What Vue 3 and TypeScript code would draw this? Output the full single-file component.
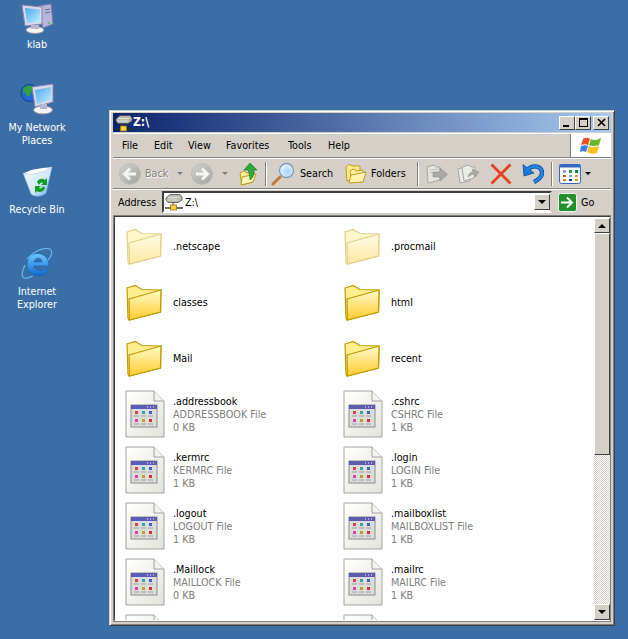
<template>
  <div class="desktop">
    <svg class="defs" width="0" height="0">
      <defs>
        <linearGradient id="folderFront" x1="0" y1="0" x2="0" y2="1">
          <stop offset="0" stop-color="#fffbc8" />
          <stop offset="1" stop-color="#ffcc30" />
        </linearGradient>
        <linearGradient id="page" x1="0" y1="0" x2="1" y2="1">
          <stop offset="0" stop-color="#ffffff" />
          <stop offset="1" stop-color="#e4e4dc" />
        </linearGradient>
        <linearGradient id="screen" x1="0" y1="0" x2="1" y2="1">
          <stop offset="0" stop-color="#4aa8f0" />
          <stop offset="1" stop-color="#c4ecff" />
        </linearGradient>
        <linearGradient id="bin" x1="0" y1="0" x2="1" y2="1">
          <stop offset="0" stop-color="#f4fbff" />
          <stop offset="0.6" stop-color="#cfe8fa" />
          <stop offset="1" stop-color="#5ba8e8" />
        </linearGradient>
        <linearGradient id="ieBlue" x1="0" y1="0" x2="0" y2="1">
          <stop offset="0" stop-color="#6cc8fc" />
          <stop offset="1" stop-color="#1468d0" />
        </linearGradient>
        <linearGradient id="btn" x1="0" y1="0" x2="1" y2="1">
          <stop offset="0" stop-color="#d0d0cc" />
          <stop offset="1" stop-color="#a4a4a0" />
        </linearGradient>
        <radialGradient id="lens" cx="0.6" cy="0.6" r="0.7">
          <stop offset="0" stop-color="#a8d4fa" />
          <stop offset="1" stop-color="#eef8ff" />
        </radialGradient>

        <symbol id="folder" viewBox="0 0 40 40">
          <path d="M2 6 L10 3.5 L17 7.5 L36 8 L35.5 30 L4 38 L3 36 Z" fill="#ffee90" stroke="#c09a00" stroke-width="1.2" />
          <path d="M4 17 L36 8 L35.5 30 L4.5 38 Z" fill="url(#folderFront)" stroke="#c09a00" stroke-width="1.2" />
        </symbol>

        <symbol id="doc" viewBox="0 0 40 48">
          <path d="M1 1 H29 L39 11 V47 H1 Z" fill="url(#page)" stroke="#a4a49c" />
          <path d="M29 1 V11 H39" fill="#f4f4f0" stroke="#a4a49c" />
          <rect x="6" y="15" width="26" height="22" fill="#dcdcd8" stroke="#8c8c94" />
          <rect x="6" y="15" width="26" height="4" fill="#5c5cb0" />
          <path d="M22 17 h1 m2 0 h1 m2 0 h1" stroke="#fff" />
          <rect x="10" y="21" width="3" height="3" fill="#d84050" />
          <rect x="17" y="21" width="3" height="3" fill="#30a8b0" />
          <rect x="24" y="21" width="3" height="3" fill="#4060c8" />
          <rect x="10" y="29" width="3" height="3" fill="#d840c0" />
          <rect x="17" y="29" width="3" height="3" fill="#b8a820" />
          <rect x="24" y="29" width="3" height="3" fill="#d03040" />
          <path d="M9 26 h5 m2 0 h5 m2 0 h5 M9 34 h5 m2 0 h5 m2 0 h5" stroke="#a0a0a0" />
        </symbol>

        <symbol id="netdrive" viewBox="0 0 18 18">
          <path d="M1 5 L5 1.5 H15 L17 4 V7 L13 9.5 H3 L1 7 Z" fill="#b8b8b0" stroke="#505050" stroke-width="0.8" />
          <path d="M3 4.5 H14 M2 7 H13" stroke="#f0f0ec" stroke-width="0.8" />
          <path d="M8 9.5 V12" stroke="#404040" />
          <path d="M0 15 H18" stroke="#303030" stroke-width="1.4" />
          <rect x="5.5" y="12" width="6" height="5" fill="#f8d040" stroke="#a07810" stroke-width="0.8" />
        </symbol>
      </defs>
    </svg>

    <div class="desk-icon pc">
      <svg width="34" height="32" viewBox="0 0 34 32">
        <path d="M18 4 L31 2 L33 22 L23 26 Z" fill="#b6b6dc" stroke="#7c7ca8" />
        <path d="M25 8 L30 7 M25 11 L30 10" stroke="#6a6a98" />
        <circle cx="29" cy="21" r="1" fill="#50c040" />
        <path d="M2 3 L22 5 L22 22 L5 24 Z" fill="#d8d8ec" stroke="#8484b0" />
        <path d="M5 6 L20 7.5 L20 20 L7 21 Z" fill="url(#screen)" />
        <ellipse cx="15" cy="28" rx="9" ry="3.5" fill="#f4f4f4" stroke="#9090a8" />
        <rect x="11" y="23" width="8" height="4" fill="#b8b8d0" />
      </svg>
      <span>klab</span>
    </div>
    <div class="desk-icon net">
      <svg width="34" height="32" viewBox="0 0 34 32">
        <circle cx="9.5" cy="10" r="8.5" fill="#2468d8" stroke="#1c3c90" />
        <path d="M5 4 C9 1 13 3 14 6 C12 9 11 8 10 12 C8 15 6 12 5 10 C2 9 2 6 5 4 Z" fill="#30a040" />
        <path d="M12 4 L33 1 L33 19 L15 24 Z" fill="#d8d8ec" stroke="#8484b0" />
        <path d="M15 7 L31 4 L31 17 L17 21 Z" fill="url(#screen)" />
        <ellipse cx="23" cy="27" rx="9.5" ry="4" fill="#f4f4f4" stroke="#9090a8" />
        <rect x="20" y="21" width="7" height="5" fill="#b8b8d0" />
      </svg>
      <span>My Network<br />Places</span>
    </div>
    <div class="desk-icon bin">
      <svg width="32" height="32" viewBox="0 0 32 32">
        <path d="M2 7 C10 10 24 6 31 1 L25 27 C21 31 13 31 10 28 Z" fill="url(#bin)" stroke="#88b0d8" stroke-width="0.6" />
        <path d="M3 7 C10 3 22 2 31 1 C24 6 10 10 3 7 Z" fill="#fbfdff" />
        <g transform="translate(2 2)">
          <path d="M14 14 C16 10 20 10 22 12 L24 10 V17 H18 L20 15 C18 14 17 15 16 17 Z M22 20 C21 24 16 25 14 23 L12 25 V18 H18 L16 20 C18 21 19 20 20 18 Z" fill="#10a020" />
        </g>
      </svg>
      <span>Recycle Bin</span>
    </div>
    <div class="desk-icon ie">
      <svg width="32" height="32" viewBox="0 0 32 32">
        <path d="M6 17 C6 7 14 4 20 6 C26 8 28 13 28 18 H13 C14 23 20 24 26 20 L25 26 C17 30 6 27 6 17 Z M13 14 H21 C21 9 14 9 13 14 Z" fill="url(#ieBlue)" fill-rule="evenodd" stroke="#1460b8" stroke-width="0.6" />
        <path d="M6 11 C13 4 22 -1 29 1 C32 3 31 8 27 12 M4 17 C1 23 0 29 3 30 C6 31 9 29 12 28" fill="none" stroke="#62b4f0" stroke-width="1.3" />
      </svg>
      <span>Internet<br />Explorer</span>
    </div>

    <div class="window">
      <div class="titlebar">
        <svg width="18" height="18"><use href="#netdrive" /></svg>
        <span class="title-text">Z:\</span>
        <div class="caption-btns">
          <button class="cap"><span class="cap-min"></span></button>
          <button class="cap"><span class="cap-max"></span></button>
          <button class="cap cap-close">
            <svg width="9" height="9" viewBox="0 0 9 9"><path d="M1 1 L8 8 M8 1 L1 8" stroke="#000" stroke-width="1.6" /></svg>
          </button>
        </div>
      </div>

      <div class="menubar">
        <span v-for="m in menus" :key="m.label" class="menu" :style="{ width: m.width + 'px' }">{{ m.label }}</span>
        <div class="flag">
          <svg width="22" height="20" viewBox="0 0 22 20">
            <path d="M3 3 C6 1 8 2 10 3 L8 9 C6 8 4 8 1 9 Z" fill="#e8562a" />
            <path d="M11 3 C14 5 17 4 21 2 L19 9 C16 10 12 11 9 9 Z" fill="#6cb82c" />
            <path d="M1 10 C4 9 6 9 8 10 L6 16 C4 15 2 15 0 16 Z" fill="#3c80e0" />
            <path d="M9 10 C12 12 15 11 19 10 L17 17 C14 18 10 18 7 16 Z" fill="#f8c020" />
          </svg>
        </div>
      </div>

      <div class="toolbar">
        <div class="tool back">
          <svg width="22" height="22" viewBox="0 0 22 22">
            <circle cx="11" cy="11" r="10.5" fill="url(#btn)" stroke="#bcbcb8" />
            <path d="M17 11 H6 M11 5.5 L5.5 11 L11 16.5" fill="none" stroke="#f4f4f2" stroke-width="3" />
          </svg>
          <span class="disabled">Back</span>
        </div>
        <span class="caret gray fwd-gap"></span>
        <svg width="22" height="22" viewBox="0 0 22 22">
          <circle cx="11" cy="11" r="10.5" fill="url(#btn)" stroke="#bcbcb8" />
          <path d="M5 11 H16 M11 5.5 L16.5 11 L11 16.5" fill="none" stroke="#f4f4f2" stroke-width="3" />
        </svg>
        <span class="caret gray up-gap"></span>
        <svg width="20" height="24" viewBox="0 0 20 24">
          <path d="M1 11 L5 9 L8 11 L15 10 L14 20 L3 23 Z" fill="#fcec98" stroke="#c09a18" />
          <path d="M3 15 L17 12 L14 20 L2 23 Z" fill="#fff4b8" stroke="#c09a18" />
          <path d="M11 1 L18 8 H15 C15 13 14 16 11 18 C11 14 10 11 9 8 H5 Z" fill="#2ca83c" stroke="#107018" stroke-width="0.6" />
        </svg>
        <i class="tsep sep-up"></i>
        <div class="tool search">
          <svg width="24" height="24" viewBox="0 0 24 24">
            <path d="M2 22 L9 15" stroke="#c87838" stroke-width="3" stroke-linecap="round" />
            <circle cx="15.5" cy="8.5" r="7" fill="url(#lens)" stroke="#8098b8" stroke-width="1.3" />
          </svg>
          <span>Search</span>
        </div>
        <div class="tool folders">
          <svg width="22" height="21" viewBox="0 0 22 21">
            <path d="M1 4 L4 1.5 L8 3 L15 3 V14 L2 18 Z" fill="#fde98c" stroke="#c49a18" />
            <path d="M5 8 L8 6 L12 8 L18 7 V12 L6 15 Z" fill="#fff0a8" stroke="#c49a18" />
            <path d="M6 12 L21 9 L18 19 L4 20 Z" fill="#fff2b0" stroke="#c49a18" />
          </svg>
          <span>Folders</span>
        </div>
        <i class="tsep sep-move"></i>
        <svg width="22" height="20" viewBox="0 0 22 20">
          <path d="M1 3 L8 1 L10 3 L14 3 V16 L2 19 Z" fill="#e4e4de" stroke="#a8a8a4" />
          <path d="M4 6 L14 5 M4 9 L10 8" stroke="#c4c4c0" />
          <path d="M7 8 H14 V4 L21.5 10.5 L14 17 V13 H7 Z" fill="#a8a8a4" stroke="#909090" stroke-width="0.6" />
        </svg>
        <svg class="gap-copy" width="23" height="20" viewBox="0 0 23 20">
          <path d="M1 5 L8 3 L10 5 L13 5 V17 L3 19 Z" fill="#e8e8e2" stroke="#a8a8a4" />
          <path d="M5 3 L12 1 L14 3 L18 3 L17 14 L7 17 Z" fill="#ecece6" stroke="#a8a8a4" />
          <path d="M11 13 C12 9 14 8 16 8 L15 5 L22 8 L18 13 L17 10 C15 10 14 11 11 13 Z" fill="#a8a8a4" stroke="#909090" stroke-width="0.6" />
        </svg>
        <svg class="gap-x" width="22" height="22" viewBox="0 0 22 22">
          <path d="M1.5 1.5 L20.5 20.5 M20.5 1.5 L1.5 20.5" stroke="#e8401c" stroke-width="2.8" />
        </svg>
        <svg class="gap-x" width="22" height="21" viewBox="0 0 22 21">
          <path d="M5 7 C11 1 20 3 20 10 C20 14 16 17 12 19" fill="none" stroke="#0c4ca8" stroke-width="4.4" />
          <path d="M1 1.5 L2 13 L12 10 Z" fill="#1c78d8" stroke="#0c4ca8" stroke-width="0.8" />
          <path d="M5 7 C11 1 20 3 20 10 C20 14 16 17 12 19" fill="none" stroke="#2484e4" stroke-width="2.8" />
        </svg>
        <i class="tsep sep-views"></i>
        <svg width="22" height="20" viewBox="0 0 22 20">
          <rect x="0.5" y="0.5" width="21" height="19" rx="2" fill="#fff" stroke="#3468c0" />
          <rect x="0.5" y="0.5" width="21" height="3" fill="#3468c0" />
          <rect x="4" y="6" width="3" height="3" fill="#9c9cd8" /><rect x="10" y="6" width="3" height="3" fill="#30a040" /><rect x="16" y="6" width="3" height="3" fill="#109040" />
          <rect x="4" y="11" width="3" height="2" fill="#e85030" /><rect x="10" y="11" width="3" height="2" fill="#70a8e0" /><rect x="16" y="11" width="3" height="2" fill="#e09030" />
          <rect x="4" y="15" width="3" height="2" fill="#e8783c" /><rect x="10" y="15" width="3" height="2" fill="#1c3c90" /><rect x="16" y="15" width="3" height="2" fill="#d0a020" />
        </svg>
        <span class="caret views-gap"></span>
      </div>

      <div class="addressbar">
        <span class="addr-label">Address</span>
        <div class="addr-box">
          <svg width="18" height="18"><use href="#netdrive" /></svg>
          <span>Z:\</span>
          <button class="scroll-btn addr-drop"><span class="tri down"></span></button>
        </div>
        <svg class="go-icon" width="19" height="19" viewBox="0 0 19 19">
          <rect x="0.5" y="0.5" width="18" height="18" rx="2" fill="#20902c" stroke="#f4f4f0" />
          <path d="M3 9.5 H13 M9 4.5 L14 9.5 L9 14.5" stroke="#fff" stroke-width="2" fill="none" />
        </svg>
        <span class="go-text">Go</span>
      </div>

      <div class="content">
        <div class="tiles">
          <div v-for="(f, i) in files" :key="i" class="tile">
            <svg v-if="f.folder" class="ficon" :class="{ hidden: f.hidden }" width="40" height="40"><use href="#folder" /></svg>
            <svg v-else class="dicon" width="40" height="48"><use href="#doc" /></svg>
            <div class="meta">
              <div>{{ f.name }}</div>
              <div v-if="f.kind" class="sub">{{ f.kind }}</div>
              <div v-if="f.size" class="sub">{{ f.size }}</div>
            </div>
          </div>
        </div>
        <div class="scrollbar">
          <button class="scroll-btn first"><span class="tri up"></span></button>
          <div class="thumb"></div>
          <div class="track"></div>
          <button class="scroll-btn"><span class="tri down"></span></button>
        </div>
      </div>
    </div>
  </div>
</template>

<script setup lang="ts">
interface FileItem {
  name: string
  folder?: boolean
  hidden?: boolean
  kind?: string
  size?: string
}

const menus = [
  { label: 'File', width: 32 },
  { label: 'Edit', width: 34 },
  { label: 'View', width: 38 },
  { label: 'Favorites', width: 62 },
  { label: 'Tools', width: 40 },
  { label: 'Help', width: 40 }
]

// last row is cut off by the window, only the icon tops show
const files: FileItem[] = [
  { name: '.netscape', folder: true, hidden: true },
  { name: '.procmail', folder: true, hidden: true },
  { name: 'classes', folder: true },
  { name: 'html', folder: true },
  { name: 'Mail', folder: true },
  { name: 'recent', folder: true },
  { name: '.addressbook', kind: 'ADDRESSBOOK File', size: '0 KB' },
  { name: '.cshrc', kind: 'CSHRC File', size: '1 KB' },
  { name: '.kermrc', kind: 'KERMRC File', size: '1 KB' },
  { name: '.login', kind: 'LOGIN File', size: '1 KB' },
  { name: '.logout', kind: 'LOGOUT File', size: '1 KB' },
  { name: '.mailboxlist', kind: 'MAILBOXLIST File', size: '1 KB' },
  { name: '.Maillock', kind: 'MAILLOCK File', size: '0 KB' },
  { name: '.mailrc', kind: 'MAILRC File', size: '1 KB' },
  { name: '' },
  { name: '' }
]
</script>

<style>
html,
body {
  margin: 0;
  background: #3a6ea5;
}
</style>

<style scoped>
.desktop {
  position: relative;
  width: 628px;
  height: 639px;
  overflow: hidden;
  background: #3a6ea5;
  font-family: "DejaVu Sans", "Liberation Sans", sans-serif;
  font-stretch: condensed;
  font-size: 10.7px;
  line-height: 13px;
  color: #000;
}
.defs {
  position: absolute;
}
.desk-icon {
  position: absolute;
  left: 0;
  width: 74px;
  display: flex;
  flex-direction: column;
  align-items: center;
  color: #fff;
  text-align: center;
}
.desk-icon svg {
  display: block;
}
.desk-icon.pc {
  top: 2px;
  gap: 4px;
}
.desk-icon.net {
  top: 83px;
  gap: 6px;
}
.desk-icon.bin {
  top: 166px;
  gap: 5px;
}
.desk-icon.ie {
  top: 248px;
  gap: 5px;
}
.window {
  position: absolute;
  left: 109px;
  top: 110px;
  width: 506px;
  height: 516px;
  box-sizing: border-box;
  display: flex;
  flex-direction: column;
  padding: 2px 3px 3px 3px;
  background: #d4d0c8;
  border: 1px solid;
  border-color: #d4d0c8 #404040 #404040 #d4d0c8;
  box-shadow: inset 1px 1px 0 #fff, inset -1px -1px 0 #808080;
}
.titlebar {
  height: 19px;
  flex: none;
  display: flex;
  align-items: center;
  padding: 0 2px;
  background: linear-gradient(90deg, #0a246a, #a6caf0);
  color: #fff;
  font-weight: bold;
}
.title-text {
  font-size: 12px;
}
.caption-btns {
  margin-left: auto;
  display: flex;
}
.cap {
  width: 16px;
  height: 14px;
  padding: 0;
  display: flex;
  align-items: center;
  justify-content: center;
  background: #d4d0c8;
  border: 1px solid;
  border-color: #fff #404040 #404040 #fff;
}
.cap-close {
  margin-left: 2px;
}
.cap-min {
  width: 6px;
  height: 2px;
  margin-top: 7px;
  margin-right: 2px;
  background: #000;
}
.cap-max {
  width: 9px;
  height: 9px;
  box-sizing: border-box;
  border: 1px solid #000;
  border-top-width: 2px;
}
.menubar {
  height: 25px;
  flex: none;
  margin-top: 1px;
  display: flex;
  align-items: center;
  padding-left: 3px;
  box-sizing: border-box;
  border-top: 1px solid #fff;
  border-bottom: 1px solid #808080;
}
.menu {
  box-sizing: border-box;
  padding-left: 6px;
}
.flag {
  margin-left: auto;
  align-self: stretch;
  width: 41px;
  box-sizing: border-box;
  background: #fff;
  border-left: 1px solid #808080;
  display: flex;
  align-items: center;
  justify-content: center;
}
.toolbar {
  height: 31px;
  flex: none;
  display: flex;
  align-items: center;
  padding-left: 6px;
  box-sizing: border-box;
  border-top: 1px solid #fff;
  border-bottom: 1px solid #808080;
}
.tool {
  display: flex;
  align-items: center;
  gap: 4px;
  flex: none;
}
.tool.back {
  width: 58px;
}
.tool.search {
  width: 74px;
  gap: 5px;
}
.tool.folders {
  width: 72px;
}
.disabled {
  color: #808080;
  text-shadow: 1px 1px 0 #fff;
}
.tsep {
  width: 0;
  height: 24px;
  flex: none;
  border-left: 1px solid #808080;
  border-right: 1px solid #fff;
}
.sep-up {
  margin: 0 4px 0 6px;
}
.sep-move {
  margin-right: 7px;
}
.sep-views {
  margin: 0 6px 0 7px;
}
.gap-copy {
  margin-left: 9px;
}
.gap-x {
  margin-left: 10px;
}
.fwd-gap {
  margin-right: 8px;
}
.up-gap {
  margin: 0 11px 0 9px;
}
.views-gap {
  margin-left: 4px;
}
.caret {
  width: 0;
  height: 0;
  flex: none;
  border: 3px solid transparent;
  border-top: 3px solid #000;
  border-bottom: 0;
}
.caret.gray {
  border-top-color: #808080;
}
.addressbar {
  height: 25px;
  flex: none;
  display: flex;
  align-items: center;
  padding-left: 5px;
  box-sizing: border-box;
  border-top: 1px solid #fff;
}
.addr-label {
  width: 44px;
  flex: none;
}
.addr-box {
  width: 390px;
  height: 22px;
  flex: none;
  box-sizing: border-box;
  display: flex;
  align-items: center;
  gap: 2px;
  padding-left: 1px;
  background: #fff;
  border: 2px solid;
  border-color: #404040 #d4d0c8 #fff #404040;
}
.addr-drop {
  margin-left: auto;
  height: 18px;
}
.go-icon {
  margin-left: 6px;
}
.go-text {
  margin-left: 4px;
}
.content {
  flex: 1;
  min-height: 0;
  margin-top: 1px;
  display: flex;
  overflow: hidden;
  background: #fff;
  border: solid;
  border-width: 2px 1px 2px 2px;
  border-color: #404040 #fff #fff #404040;
  outline: 1px solid #808080;
  outline-offset: -1px;
}
.tiles {
  flex: 1;
  min-width: 0;
  padding: 1px 0 0 10px;
  display: grid;
  grid-template-columns: 218px 218px;
  grid-auto-rows: 56px;
}
.tile {
  display: flex;
  align-items: center;
}
.ficon,
.dicon {
  flex: none;
  margin-right: 8px;
}
.ficon.hidden {
  opacity: 0.45;
}
.sub {
  color: #808080;
}
.scrollbar {
  width: 16px;
  flex: none;
  display: flex;
  flex-direction: column;
  padding-top: 1px;
}
.scroll-btn {
  width: 16px;
  height: 16px;
  padding: 0;
  flex: none;
  display: flex;
  align-items: center;
  justify-content: center;
  background: #d4d0c8;
  border: 1px solid;
  border-color: #fff #404040 #404040 #fff;
}
.scroll-btn.first {
  height: 15px;
}
.thumb {
  height: 222px;
  flex: none;
  box-sizing: border-box;
  background: #d4d0c8;
  border: 1px solid;
  border-color: #fff #404040 #404040 #fff;
}
.track {
  flex: 1;
  background-color: #fff;
  background-image: conic-gradient(#d4d0c8 25%, #fff 0 50%, #d4d0c8 0 75%, #fff 0);
  background-size: 2px 2px;
}
.tri {
  width: 0;
  height: 0;
  border: 4px solid transparent;
}
.tri.up {
  border-top: 0;
  border-bottom: 4px solid #000;
}
.tri.down {
  border-bottom: 0;
  border-top: 4px solid #000;
}
</style>
